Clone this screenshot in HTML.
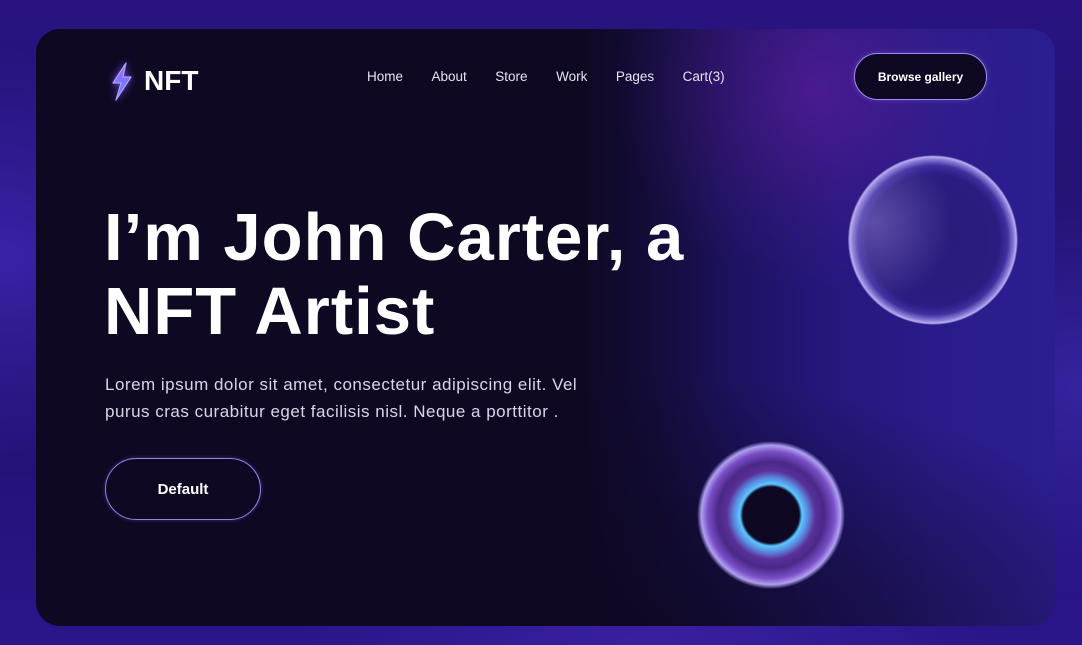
<!DOCTYPE html>
<html><head><meta charset="utf-8"><style>
*{margin:0;padding:0;box-sizing:border-box}
html,body{width:1082px;height:645px;overflow:hidden}
body{font-family:"Liberation Sans",sans-serif;background:
radial-gradient(ellipse 400px 300px at 0% 40%,#3a22a8 0%,transparent 70%),
radial-gradient(ellipse 500px 200px at 60% 100%,#3a1fa0 0%,transparent 70%),
radial-gradient(ellipse 400px 300px at 100% 60%,#3523a0 0%,transparent 70%),
linear-gradient(180deg,#2a1380 0%,#20106a 50%,#2b158a 100%);position:relative}
.card{position:absolute;left:36px;top:29px;width:1019px;height:597px;border-radius:24px;overflow:hidden;
background:
radial-gradient(ellipse 200px 200px at 780px 60px,rgba(100,30,160,.6) 0%,rgba(90,30,150,.28) 50%,transparent 100%),
radial-gradient(ellipse 600px 300px at 560px 640px,#0e0822 0%,rgba(14,8,34,.5) 55%,transparent 100%),
linear-gradient(90deg,#0e0822 0px,#0e0822 540px,#140c3a 620px,#1c1260 700px,#24177c 790px,#291c8a 900px,#2b1e90 1019px)}
.logo{position:absolute;left:68px;top:30px;display:flex;align-items:center}
.logo span{color:#fff;font-weight:bold;font-size:28px;margin-left:6px}
nav{position:absolute;top:40px;left:331px;display:flex;font-size:13.5px;color:#e6e4f0}
nav a{margin-right:28.5px}
.bg{position:absolute;left:818px;top:24px;width:133px;height:47px;border:1.5px solid #9a8cf0;border-radius:24px;color:#fff;font-size:12px;font-weight:bold;display:flex;align-items:center;justify-content:center;background:#0e0822;box-shadow:0 0 6px rgba(140,120,255,.35)}
h1{position:absolute;left:68px;top:172px;color:#fff;font-size:67px;line-height:74px;font-weight:bold;letter-spacing:1px}
p{position:absolute;left:69px;top:342px;color:#d9d5e8;font-size:17px;line-height:27px;letter-spacing:.5px}
.def{position:absolute;left:69px;top:429px;width:156px;height:62px;border:1.5px solid #9a7ef0;border-radius:31px;color:#fff;font-weight:bold;font-size:15px;display:flex;align-items:center;justify-content:center;box-shadow:0 0 4px rgba(160,120,255,.35)}
.sphere{position:absolute;left:812px;top:126px;width:170px;height:170px;border-radius:50%;
background:radial-gradient(circle closest-side at 50% 50%,#281b7c 0%,#2a1c80 78%,#3e30a0 88%,#8a7ed8 95%,#b8aef0 98%,rgba(200,190,255,0) 100%)}
.sphere:after{content:"";position:absolute;inset:0;border-radius:50%;background:radial-gradient(circle at 15% 40%,rgba(190,170,240,.35) 0%,transparent 45%)}
.torus{position:absolute;left:661px;top:412px;width:148px;height:148px;border-radius:50%;
background:radial-gradient(circle closest-side at 50% 50%,#0e0822 0%,#0e0822 38%,#5ac8ff 42%,#5a8ae0 50%,#5a3098 60%,#4a2888 72%,#7a50c8 86%,#b0a0f0 94%,rgba(150,140,255,0) 100%)}
</style></head><body>
<div class="card">
<div class="logo"><svg width="34" height="44" viewBox="0 0 34 44" style="filter:drop-shadow(0 0 4px rgba(140,90,255,.8))"><defs><linearGradient id="g" x1="0" y1="0" x2="0" y2="1"><stop offset="0" stop-color="#a060ff"/><stop offset="1" stop-color="#5a8cff"/></linearGradient></defs><path d="M22 4 L9 24 L17 24 L12 41 L27 18 L19 18 Z" fill="url(#g)" stroke="#b0a0ff" stroke-width="1.2" stroke-linejoin="round"/></svg><span>NFT</span></div>
<nav><a>Home</a><a>About</a><a>Store</a><a>Work</a><a>Pages</a><a>Cart(3)</a></nav>
<div class="bg">Browse gallery</div>
<h1>I’m John Carter, a<br>NFT Artist</h1>
<p>Lorem ipsum dolor sit amet, consectetur adipiscing elit. Vel<br>purus cras curabitur eget facilisis nisl. Neque a porttitor .</p>
<div class="def">Default</div>
<div class="sphere"></div>
<div class="torus"></div>
</div>
</body></html>
